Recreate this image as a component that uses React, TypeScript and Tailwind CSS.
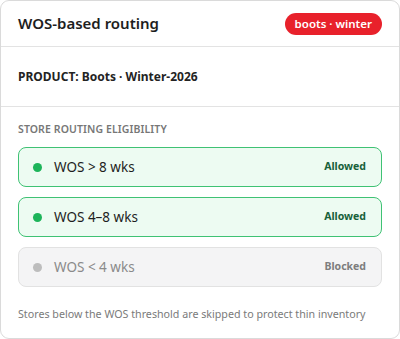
const rows = [
  { label: "WOS > 8 wks", status: "Allowed", ok: true },
  { label: "WOS 4–8 wks", status: "Allowed", ok: true },
  { label: "WOS < 4 wks", status: "Blocked", ok: false },
];

export default function App() {
  return (
    <div className="w-[400px] h-[339px] bg-white font-['Noto_Sans',sans-serif]">
      <div className="h-full flex flex-col border border-[#dadada] rounded-[9px] overflow-hidden">
        <div className="h-[46px] shrink-0 flex items-center justify-between pl-[17px] pr-[17px] border-b border-[#e3e3e3]">
          <div className="text-[15px] font-semibold text-[#1e1e1e]">WOS-based routing</div>
          <div className="h-[22px] px-[10px] flex items-center rounded-full bg-[#e8212b] text-white text-[11.5px] font-semibold">
            boots · winter
          </div>
        </div>

        <div className="h-[60px] shrink-0 flex items-center pl-[17px] border-b border-[#e3e3e3]">
          <div className="text-[12px] font-bold text-[#232323]">PRODUCT: Boots · Winter-2026</div>
        </div>

        <div className="flex flex-col px-[17px] pt-[14px]">
          <div className="text-[10.5px] font-semibold tracking-[0.01em] text-[#777] leading-[16px]">
            STORE ROUTING ELIGIBILITY
          </div>
          <div className="flex flex-col gap-[10px] mt-[10px]">
            {rows.map((r) => (
              <div
                key={r.label}
                className={
                  r.ok
                    ? "h-[40px] flex items-center pl-[14px] pr-[15px] rounded-[8px] border-[1.5px] border-[#3fc274] bg-[#edfbf2]"
                    : "h-[40px] flex items-center pl-[14px] pr-[15px] rounded-[8px] border-[1.5px] border-[#e2e2e2] bg-[#f4f4f5]"
                }
              >
                <span
                  className={
                    r.ok
                      ? "w-[9px] h-[9px] rounded-full bg-[#1db45a]"
                      : "w-[9px] h-[9px] rounded-full bg-[#bdbdbd]"
                  }
                />
                <span className={r.ok ? "ml-[12px] text-[13.5px] text-[#1e1e1e]" : "ml-[12px] text-[13.5px] text-[#8a8a8a]"}>
                  {r.label}
                </span>
                <span className={r.ok ? "ml-auto text-[10.5px] font-bold text-[#17613a]" : "ml-auto text-[10.5px] font-bold text-[#7d7d7d]"}>
                  {r.status}
                </span>
              </div>
            ))}
          </div>
          <div className="mt-[18px] text-[10.7px] text-[#7a7a7a] leading-[18px]">
            Stores below the WOS threshold are skipped to protect thin inventory
          </div>
        </div>
      </div>
    </div>
  );
}
